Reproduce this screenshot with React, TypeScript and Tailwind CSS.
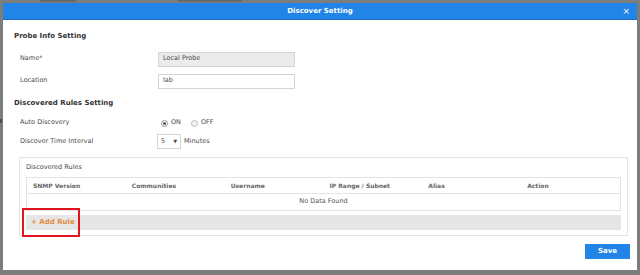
export default function App() {
  const cols = ["SNMP Version", "Communities", "Username", "IP Range / Subnet", "Alias", "Action"];

  return (
    <div className="w-[640px] h-[275px] bg-[#7d7d7d] overflow-hidden relative" style={{ fontFamily: '"DejaVu Sans", Verdana, sans-serif' }}>
      {/* page behind overlay, only the bottom of its text shows */}
      <div className="absolute top-0 left-[40px] h-[2px] w-[36px] bg-[#5a5a5a] opacity-60" />
      <div className="absolute top-0 left-[178px] h-[2px] w-[64px] bg-[#5a5a5a] opacity-60" />
      <div className="absolute top-[119px] left-0 h-[4px] w-[2px] bg-[#3a3a3a] opacity-70" />
      <div className="pt-[3px] pl-[3px]">
        <div className="relative w-[634px] h-[267px] bg-white flex flex-col">
          {/* Header */}
          <div className="h-[17px] bg-[#2185e8] border-b border-[#1b6cc0] flex items-center justify-center relative">
            <span className="text-white font-bold text-[7px]">Discover Setting</span>
            <span className="absolute right-[7px] top-[3px] text-white text-[9px] leading-[10px]">×</span>
          </div>

          <div className="px-[11px] text-[6.5px] text-[#4a4a4a]">
            <div className="pt-[11px] font-bold text-[#333] text-[7px]">Probe Info Setting</div>

            <div className="mt-[10px] flex items-center h-[15px] pl-[6px]">
              <span className="w-[138px]">Name*</span>
              <div className="w-[137px] h-[15px] bg-[#ebebeb] border border-[#d4d4d4] flex items-center px-[4px]">Local Probe</div>
            </div>
            <div className="mt-[7px] flex items-center h-[15px] pl-[6px]">
              <span className="w-[138px]">Location</span>
              <div className="w-[137px] h-[15px] bg-white border border-[#d4d4d4] flex items-center px-[4px]">lab</div>
            </div>

            <div className="mt-[9px] font-bold text-[#333] text-[7px]">Discovered Rules Setting</div>

            <div className="mt-[9px] flex items-center h-[12px] pl-[6px]">
              <span className="w-[141px]">Auto Discovery</span>
              <span className="w-[7px] h-[7px] rounded-full border border-[#999] bg-white flex items-center justify-center">
                <span className="w-[3px] h-[3px] rounded-full bg-[#555]" />
              </span>
              <span className="ml-[3px]">ON</span>
              <span className="ml-[10px] w-[7px] h-[7px] rounded-full border border-[#bbb] bg-[#f2f2f2]" />
              <span className="ml-[3px]">OFF</span>
            </div>

            <div className="mt-[5px] flex items-center h-[15px] pl-[6px]">
              <span className="w-[137px]">Discover Time Interval</span>
              <div className="w-[24px] h-[15px] border border-[#d4d4d4] flex items-center justify-between px-[3px]">
                <span>5</span>
                <span className="text-[5px]">▼</span>
              </div>
              <span className="ml-[3px]">Minutes</span>
            </div>

            {/* Discovered rules panel */}
            <div className="mt-[8px] ml-[5px] w-[609px] border border-[#e3e3e3] px-[6px] pb-[5px]">
              <div className="pt-[5px] h-[19px]">Discovered Rules</div>
              <div className="border border-[#e3e3e3]">
                <div className="grid grid-cols-6 h-[16px] items-center border-b border-[#e3e3e3] font-bold text-[#666] text-[6px]">
                  {cols.map((c) => (
                    <span key={c} className="pl-[6px]">{c}</span>
                  ))}
                </div>
                <div className="h-[16px] flex items-center justify-center text-[#555]">No Data Found</div>
              </div>
              <div className="mt-[4px] h-[15px] bg-[#e6e6e6] flex items-center relative">
                <span className="pl-[5px] font-bold text-[#e38b3f] text-[7px]">+ Add Rule</span>
                <div className="absolute left-[-4px] top-[-7px] w-[58px] h-[29px] border-2 border-[#e1141f]" />
              </div>
            </div>

            <div className="mt-[8px] flex justify-end">
              <button className="w-[45px] h-[15px] bg-[#2185e8] text-white font-bold text-[7px] mr-[-4px]">Save</button>
            </div>
          </div>
        </div>
      </div>
    </div>
  );
}
